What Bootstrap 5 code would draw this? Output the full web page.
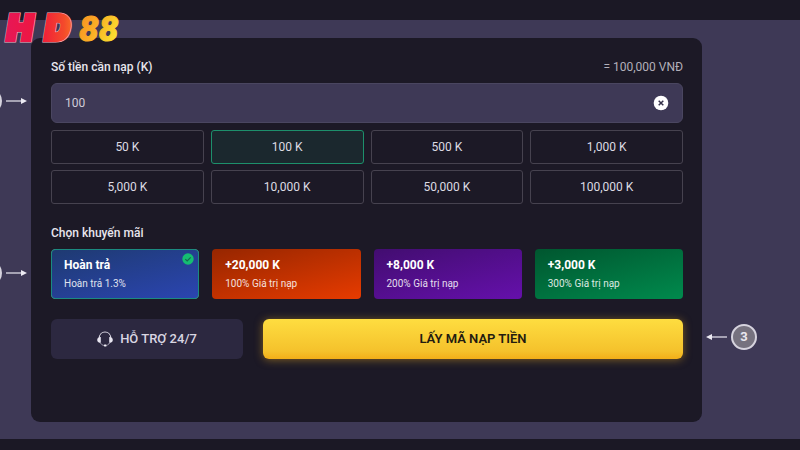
<!DOCTYPE html>
<html lang="vi" data-bs-theme="dark">
<head>
<meta charset="utf-8">
<meta name="viewport" content="width=device-width, initial-scale=1">
<title>HD88 - Nạp tiền</title>
<link rel="stylesheet" href="https://cdn.jsdelivr.net/npm/bootstrap@5.3.0/dist/css/bootstrap.min.css">
<style>
  body { background: #1b1825; color: #e8e6ee; font-family: Roboto, "Noto Sans", sans-serif; font-size: 12px; line-height: 16px; }
  .topbar { height: 20px; }
  .bottombar { height: 11px; }
  .brand { position: absolute; left: 0; top: 8px; z-index: 2; }
  .brand svg, .callout svg, .support svg, .clear svg { display: block; flex: none; }
  .brand svg { overflow: visible; }
  .stage { background: #3e3956; padding: 18px 0 17px; overflow: hidden; }
  .rail-start { width: 31px; padding-top: 50px; padding-right: 4px; gap: 146px; }
  .rail-end { width: 98px; padding-top: 286px; padding-left: 4px; }
  .callout { gap: 4px; }
  .bubble { width: 26px; height: 26px; flex: none; border: 2px solid #d6d3de; border-radius: 50%; background: #76727f; color: #e9e7ef; font-weight: 700; font-size: 13px; }
  .panel { background: #1c1926; border-radius: 9px; padding: 21px 19px 20px 20px; }
  .row-label { font-weight: 500; font-size: 12px; }
  .converted { font-size: 12px; color: #b3b0ba; }
  .amount { position: relative; margin: 8px 0 7px; }
  .amount .form-control { height: 40px; padding: 0 44px 0 13px; background: #3e3956; border: 1px solid #4a4660; border-radius: 6px; color: #cfccd8; font-size: 12px; }
  .clear { position: absolute; right: 14px; top: 12px; width: 16px; height: 16px; padding: 0; border: 0; background: none; }
  .choices { display: grid; grid-template-columns: repeat(4, 1fr); gap: 6px 7px; }
  .choices .btn { height: 34px; padding: 0; font-size: 12px; line-height: 16px; color: #dddbe3; border: 1px solid #46424f; border-radius: 3px; }
  .choices .btn.active { background: #1b282e; border-color: #1d8f6b; color: #dddbe3; }
  .promo-label { margin: 21px 0 8px; }
  .promos { display: grid; grid-template-columns: repeat(4, 1fr); gap: 13px; }
  .promo { position: relative; height: 50px; padding: 0 12px; border: 1px solid transparent; border-radius: 4px; background-origin: border-box; text-align: left; color: #fff; }
  .promo strong { display: block; font-size: 12px; line-height: 16px; font-weight: 700; margin-bottom: 4px; }
  .promo span { display: block; font-size: 10px; line-height: 14px; opacity: .85; }
  .promo-blue { background-image: linear-gradient(165deg, #1e3a70, #2b45b2); border-color: #1b8a80; }
  .promo-red { background-image: linear-gradient(165deg, #962600, #e73b00); }
  .promo-violet { background-image: linear-gradient(165deg, #420d70, #6510ab); }
  .promo-green { background-image: linear-gradient(165deg, #00562f, #008a4d); }
  .tick { position: absolute; right: 4px; top: 3px; }
  .actions { margin-top: 20px; gap: 20px; }
  .support, .submit { height: 40px; padding: 0; border: 0; border-radius: 6px; font-size: 13px; line-height: 18px; font-weight: 500; }
  .support { flex: 192 1 0; gap: 7px; background: #2c2840; color: #d9d6e2; }
  .submit { flex: 420 1 0; background: linear-gradient(#fedd40, #f5c22c 80%, #f3ae18); color: #231b10; font-weight: 600; box-shadow: 0 1px 8px #d39b2488; }
</style>
</head>
<body class="d-flex flex-column min-vh-100">
<header class="topbar">
  <a class="brand" href="#" aria-label="HD88">
    <svg width="130" height="40" viewBox="0 0 130 40">
      <defs>
        <linearGradient id="hot" gradientUnits="userSpaceOnUse" x1="0" y1="0" x2="80" y2="0">
          <stop offset="0" stop-color="#e5175c"/><stop offset=".5" stop-color="#f0173c"/><stop offset=".8" stop-color="#f44a2b"/><stop offset="1" stop-color="#fb8c22"/>
        </linearGradient>
        <linearGradient id="gold" gradientUnits="userSpaceOnUse" x1="80" y1="0" x2="120" y2="20">
          <stop offset="0" stop-color="#f88a22"/><stop offset=".5" stop-color="#fbae25"/><stop offset="1" stop-color="#fbe02f"/>
        </linearGradient>
      </defs>
      <g font-family="Inter, sans-serif" font-weight="900" font-style="italic" font-size="34">
        <g fill="none" stroke="#f3b3c0" stroke-width="5"><text x="7" y="32">H</text><text x="45" y="32">D</text></g>
        <g fill="url(#hot)" stroke="url(#hot)" stroke-width="4"><text x="7" y="32">H</text><text x="45" y="32">D</text></g>
      </g>
      <text x="79" y="33" font-family="Roboto" font-weight="900" font-style="italic" font-size="35" fill="url(#gold)" stroke="url(#gold)" stroke-width="1">88</text>
    </svg>
  </a>
</header>

<main class="stage d-flex flex-grow-1">
  <div class="rail-start d-flex flex-column align-items-end">
    <div class="callout d-flex align-items-center justify-content-end">
      <span class="bubble"></span>
      <svg width="21" height="8" viewBox="0 0 21 8"><path d="M0 4h16" stroke="#dedbe6" stroke-width="1.3"/><path d="M15 1l6 3-6 3z" fill="#eceaf2"/></svg>
    </div>
    <div class="callout d-flex align-items-center justify-content-end">
      <span class="bubble"></span>
      <svg width="21" height="8" viewBox="0 0 21 8"><path d="M0 4h16" stroke="#dedbe6" stroke-width="1.3"/><path d="M15 1l6 3-6 3z" fill="#eceaf2"/></svg>
    </div>
  </div>

  <form class="panel flex-grow-1">
    <div class="d-flex justify-content-between">
      <label class="row-label" for="amount">Số tiền cần nạp (K)</label>
      <output class="converted p-0" for="amount">= 100,000 VNĐ</output>
    </div>
    <div class="amount">
      <input class="form-control" id="amount" type="text" inputmode="numeric" value="100">
      <button class="clear" type="button" aria-label="Xóa">
        <svg width="16" height="16" viewBox="0 0 16 16"><circle cx="8" cy="8" r="7.3" fill="#fff"/><path d="M5.7 5.7l4.6 4.6M10.3 5.7l-4.6 4.6" stroke="#35314a" stroke-width="1.5"/></svg>
      </button>
    </div>
    <div class="choices">
      <button class="btn" type="button">50 K</button>
      <button class="btn active" type="button">100 K</button>
      <button class="btn" type="button">500 K</button>
      <button class="btn" type="button">1,000 K</button>
      <button class="btn" type="button">5,000 K</button>
      <button class="btn" type="button">10,000 K</button>
      <button class="btn" type="button">50,000 K</button>
      <button class="btn" type="button">100,000 K</button>
    </div>

    <div class="row-label promo-label">Chọn khuyến mãi</div>
    <div class="promos">
      <button class="promo promo-blue" type="button"><strong>Hoàn trả</strong><span>Hoàn trả 1.3%</span>
        <svg class="tick" width="12" height="12" viewBox="0 0 12 12"><circle cx="6" cy="6" r="5.7" fill="#15bd72"/><path d="M3.3 6.1l1.9 1.8 3.5-3.6" fill="none" stroke="#17694f" stroke-width="1.2"/></svg>
      </button>
      <button class="promo promo-red" type="button"><strong>+20,000 K</strong><span>100% Giá trị nạp</span></button>
      <button class="promo promo-violet" type="button"><strong>+8,000 K</strong><span>200% Giá trị nạp</span></button>
      <button class="promo promo-green" type="button"><strong>+3,000 K</strong><span>300% Giá trị nạp</span></button>
    </div>

    <div class="actions d-flex">
      <button class="support btn d-flex align-items-center justify-content-center" type="button">
        <svg width="16" height="16" viewBox="0 0 16 16"><path d="M2.2 7.5C2.2 3.6 4.7 1 8 1s5.800 2.600 5.800 6.500" fill="none" stroke="#d9d6e2" stroke-width="1.100"/><path d="M3.800 6v5.800C1.500 11.800.2 10.700.2 8.900S1.500 6 3.800 6zM12.200 6v5.800c2.300 0 3.600-1.100 3.600-2.900S14.500 6 12.200 6z" fill="#e8e5f0"/><path d="M3.200 11.500c.8 1.600 2 2.600 3.500 2.900M12.900 11.500c-.6 1.200-1.500 2.100-2.600 2.600" fill="none" stroke="#aaa6b8" stroke-width="1"/><rect x="6.800" y="13.500" width="2.900" height="1.900" rx=".9" fill="#f1eff6"/></svg>
        HỖ TRỢ 24/7
      </button>
      <button class="submit btn" type="submit">LẤY MÃ NẠP TIỀN</button>
    </div>
  </form>

  <div class="rail-end">
    <div class="callout d-flex align-items-center">
      <svg width="21" height="8" viewBox="0 0 21 8"><path d="M5 4h16" stroke="#dedbe6" stroke-width="1.3"/><path d="M6 1L0 4l6 3z" fill="#eceaf2"/></svg>
      <span class="bubble d-flex align-items-center justify-content-center">3</span>
    </div>
  </div>
</main>
<footer class="bottombar"></footer>
<script src="https://cdn.jsdelivr.net/npm/bootstrap@5.3.0/dist/js/bootstrap.bundle.min.js"></script>
</body>
</html>
